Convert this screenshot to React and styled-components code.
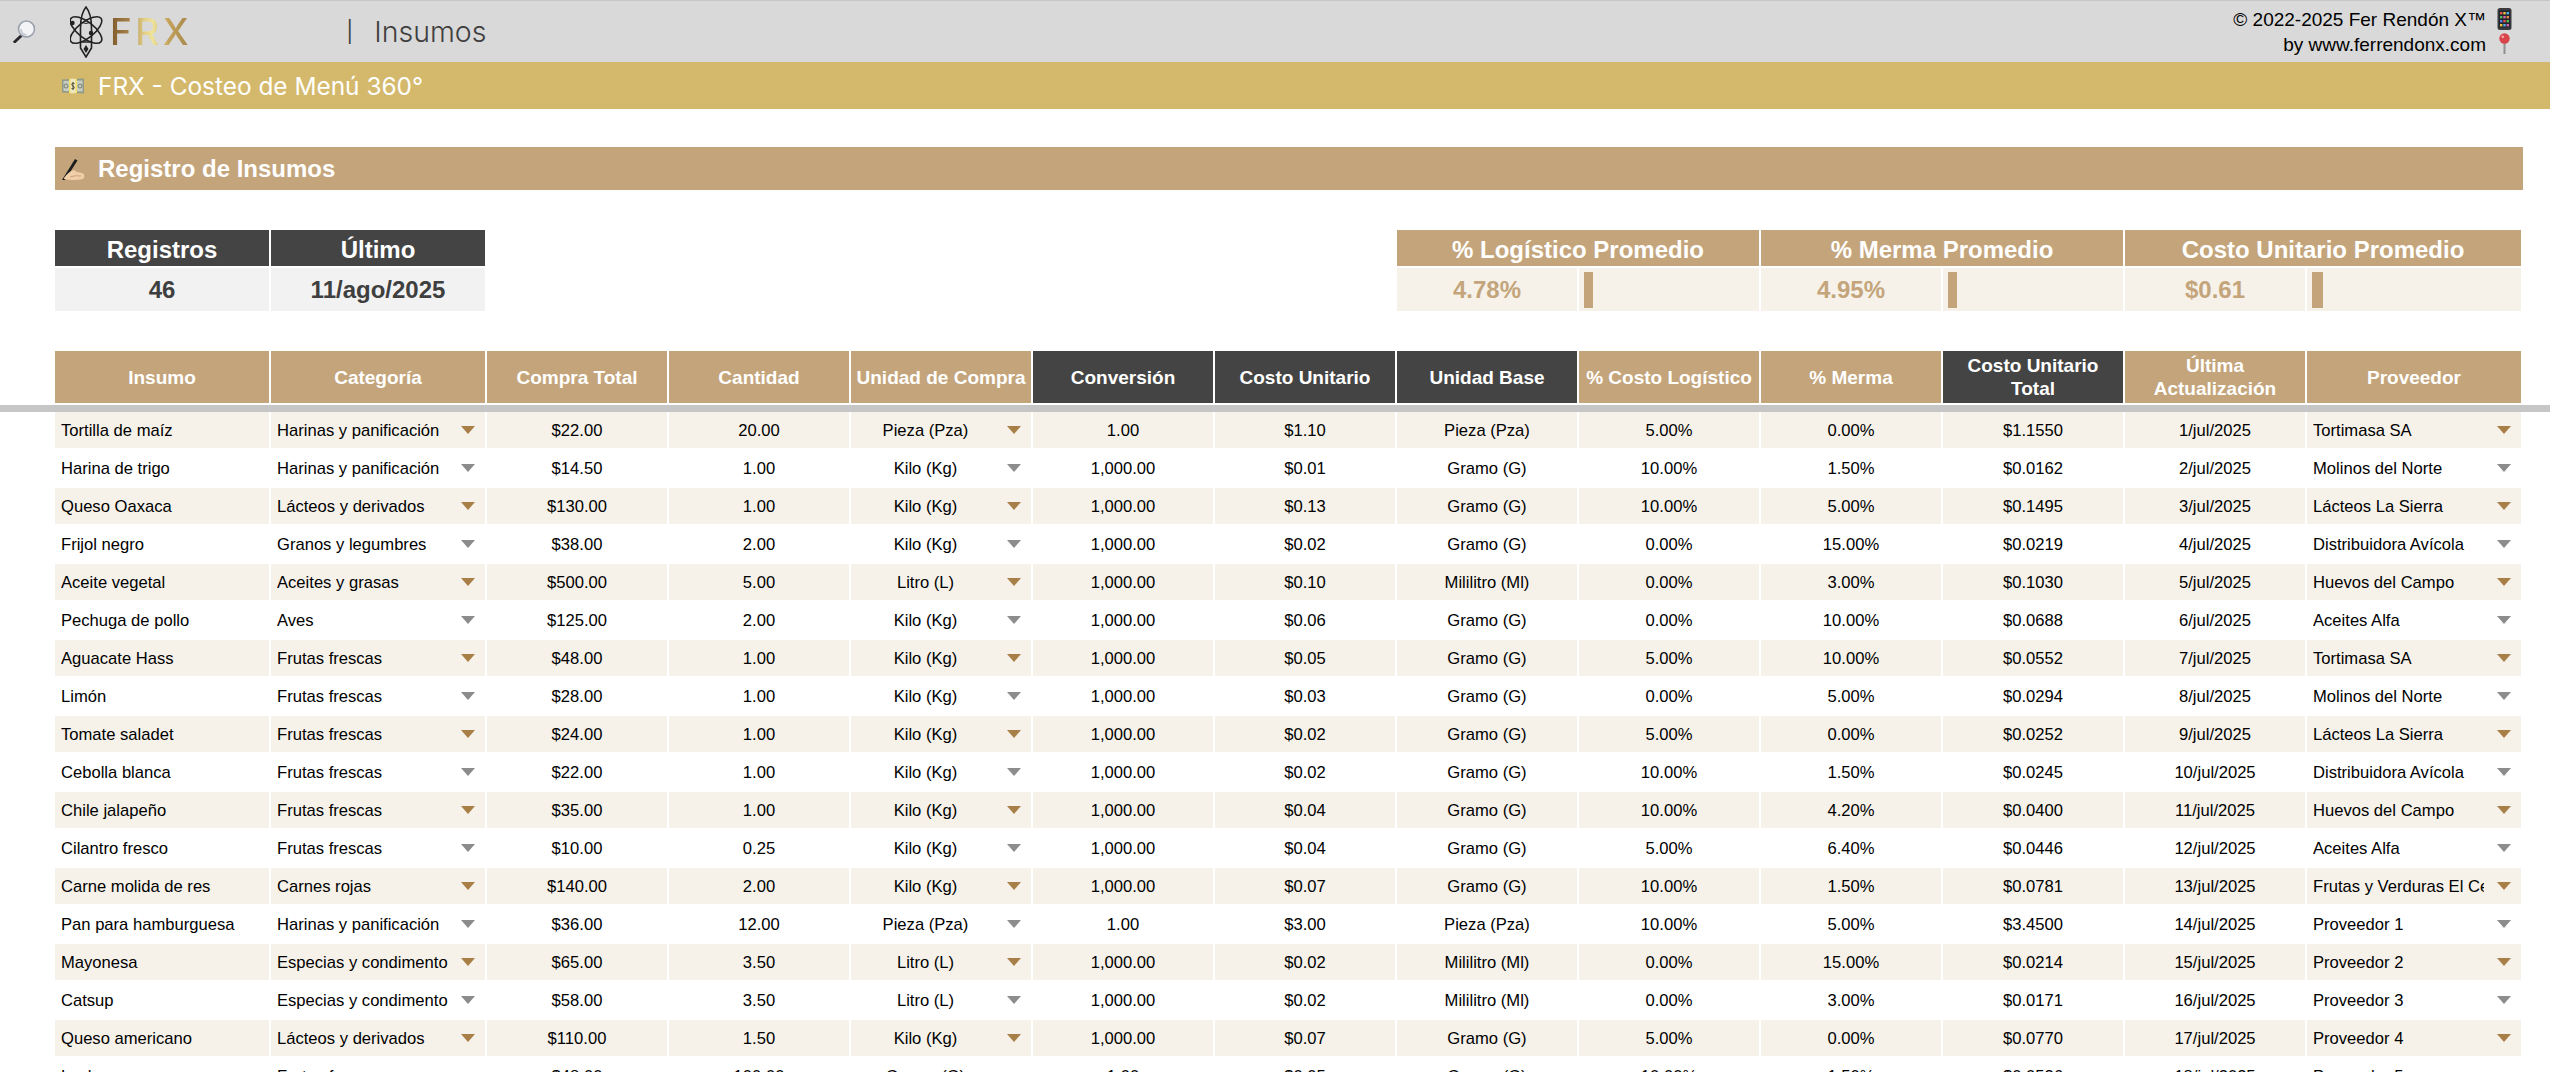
import React from 'react';
import styled, { createGlobalStyle } from 'styled-components';

const COLUMNS = '214px 214px repeat(10, 180px) 214px';
const TAN = '#c4a57b';
const DARK = '#444444';
const CREAM = '#f6f2ea';

const GlobalStyle = createGlobalStyle`
  html, body {
    margin: 0;
    padding: 0;
    background: #fff;
    overflow: hidden;
  }
  * {
    box-sizing: border-box;
  }
`;

const Page = styled.div`
  width: 2550px;
  height: 1072px;
  overflow: hidden;
  font-family: "Liberation Sans", Arial, sans-serif;
  color: #000;
`;

const TopBar = styled.header`
  height: 62px;
  display: flex;
  align-items: center;
  padding: 0 38px 0 11px;
  background: #d9d9d9;
  border-top: 1px solid #c6c6c6;
`;

const SearchIcon = styled.svg`
  width: 25px;
  height: 24px;
  flex: none;
  margin-top: 1px;
`;

const LogoMark = styled.svg`
  width: 34px;
  height: 52px;
  flex: none;
  margin-left: 34px;
`;

const LogoText = styled.span`
  margin-left: 6px;
  font-family: Inter, sans-serif;
  font-size: 37px;
  font-weight: 500;
  line-height: 1;
  letter-spacing: 3.5px;
  background: linear-gradient(90deg, #7d5a2c 0%, #a9834a 24%, #e2d086 42%, #efe39a 52%, #c2a159 72%, #a3844a 100%);
  -webkit-background-clip: text;
  background-clip: text;
  color: transparent;
`;

const PageTitle = styled.div`
  display: flex;
  align-items: center;
  margin-left: 154px;
  font-family: Inter, sans-serif;
  font-size: 28.5px;
  font-weight: 300;
  color: #3f3f3f;
`;

const TitleBar = styled.span`
  margin-right: 21px;
  font-size: 21px;
  font-weight: 400;
`;

const Credits = styled.div`
  margin-left: auto;
  display: flex;
  flex-direction: column;
  font-size: 19px;
  line-height: 25px;
`;

const CreditLine = styled.div`
  display: flex;
  justify-content: flex-end;
  align-items: center;
  gap: 11px;
  height: 25px;
`;

const CreditIcon = styled.svg`
  width: 15px;
  height: 22px;
  flex: none;
`;

const AppBar = styled.div`
  height: 47px;
  display: flex;
  align-items: center;
  gap: 13px;
  padding-left: 61px;
  background: #d4b96c;
  color: #fff;
  font-family: Inter, sans-serif;
  font-size: 24.4px;
  font-weight: 400;
`;

const BannerIcon = styled.svg`
  width: 24px;
  height: 24px;
  flex: none;
`;

const SectionTitle = styled.h1`
  height: 43px;
  width: 2468px;
  margin: 38px 0 0 55px;
  padding-left: 6px;
  display: flex;
  align-items: center;
  gap: 13px;
  background: ${TAN};
  color: #fff;
  font-size: 24px;
  font-weight: 700;
`;

const SummaryGrid = styled.section`
  display: grid;
  grid-template-columns: ${COLUMNS};
  grid-template-rows: 36px 43px;
  gap: 2px;
  margin: 40px 0 0 55px;
`;

const SummaryHead = styled.div`
  grid-column: ${props => props.$col} / span ${props => props.$span || 1};
  grid-row: 1;
  padding-top: 3px;
  text-align: center;
  font-size: 24px;
  font-weight: 700;
  line-height: 33px;
  color: #fff;
  background: ${props => props.$dark ? DARK : TAN};
`;

const SummaryValue = styled.div`
  grid-column: ${props => props.$col};
  grid-row: 2;
  text-align: center;
  font-size: 24px;
  font-weight: 700;
  line-height: 43px;
  color: ${props => props.$accent ? TAN : '#3f3f3f'};
  background: ${props => props.$accent ? CREAM : '#f2f2f2'};
`;

const SummaryBarCell = styled.div`
  grid-column: ${props => props.$col};
  grid-row: 2;
  padding: 4px 5px 3px;
  background: ${CREAM};
`;

const SummaryBar = styled.div`
  height: 100%;
  background: ${TAN};
`;

const TableHead = styled.div`
  display: grid;
  grid-template-columns: ${COLUMNS};
  gap: 2px;
  height: 52px;
  margin: 40px 0 0 55px;
`;

const HeadCell = styled.div`
  display: flex;
  align-items: center;
  justify-content: center;
  padding: 0 4px;
  text-align: center;
  font-size: 19px;
  font-weight: 700;
  line-height: 23px;
  color: #fff;
  background: ${props => props.$dark ? DARK : TAN};
`;

const FreezeLine = styled.div`
  height: 7px;
  margin-top: 2px;
  background: #c6c6c6;
`;

const TableBody = styled.div`
  display: flex;
  flex-direction: column;
  gap: 2px;
  margin-left: 55px;
`;

const Row = styled.div`
  display: grid;
  grid-template-columns: ${COLUMNS};
  gap: 2px;
  height: 36px;
`;

const Cell = styled.div`
  position: relative;
  padding: ${props => props.$select ? '0 37px 0 6px' : '0 6px'};
  font-size: 16.6px;
  line-height: 38px;
  text-align: ${props => props.$center ? 'center' : 'left'};
  background: ${props => props.$shaded ? CREAM : '#fff'};
`;

const CellText = styled.div`
  height: 36px;
  white-space: nowrap;
  overflow: hidden;
`;

const Caret = styled.i`
  position: absolute;
  top: 14px;
  right: 10px;
  width: 0;
  height: 0;
  border-style: solid;
  border-width: 8px 7px 0;
  border-color: ${props => props.$shaded ? '#a97f48' : '#8c8c8c'} transparent transparent;
`;

const heads = [
  ['Insumo'], ['Categoría'], ['Compra Total'], ['Cantidad'], ['Unidad de Compra'],
  ['Conversión', true], ['Costo Unitario', true], ['Unidad Base', true],
  ['% Costo Logístico'], ['% Merma'], ['Costo Unitario Total', true],
  ['Última Actualización'], ['Proveedor'],
];

const KG = ['Kilo (Kg)', '1,000.00', 'Gramo (G)'];
const LT = ['Litro (L)', '1,000.00', 'Mililitro (Ml)'];
const PZ = ['Pieza (Pza)', '1.00', 'Pieza (Pza)'];
const GR = ['Gramo (G)', '1.00', 'Gramo (G)'];

const rows = [
  ['Tortilla de maíz', 'Harinas y panificación', '$22.00', '20.00', PZ, '$1.10', '5.00%', '0.00%', '$1.1550', 'Tortimasa SA'],
  ['Harina de trigo', 'Harinas y panificación', '$14.50', '1.00', KG, '$0.01', '10.00%', '1.50%', '$0.0162', 'Molinos del Norte'],
  ['Queso Oaxaca', 'Lácteos y derivados', '$130.00', '1.00', KG, '$0.13', '10.00%', '5.00%', '$0.1495', 'Lácteos La Sierra'],
  ['Frijol negro', 'Granos y legumbres', '$38.00', '2.00', KG, '$0.02', '0.00%', '15.00%', '$0.0219', 'Distribuidora Avícola'],
  ['Aceite vegetal', 'Aceites y grasas', '$500.00', '5.00', LT, '$0.10', '0.00%', '3.00%', '$0.1030', 'Huevos del Campo'],
  ['Pechuga de pollo', 'Aves', '$125.00', '2.00', KG, '$0.06', '0.00%', '10.00%', '$0.0688', 'Aceites Alfa'],
  ['Aguacate Hass', 'Frutas frescas', '$48.00', '1.00', KG, '$0.05', '5.00%', '10.00%', '$0.0552', 'Tortimasa SA'],
  ['Limón', 'Frutas frescas', '$28.00', '1.00', KG, '$0.03', '0.00%', '5.00%', '$0.0294', 'Molinos del Norte'],
  ['Tomate saladet', 'Frutas frescas', '$24.00', '1.00', KG, '$0.02', '5.00%', '0.00%', '$0.0252', 'Lácteos La Sierra'],
  ['Cebolla blanca', 'Frutas frescas', '$22.00', '1.00', KG, '$0.02', '10.00%', '1.50%', '$0.0245', 'Distribuidora Avícola'],
  ['Chile jalapeño', 'Frutas frescas', '$35.00', '1.00', KG, '$0.04', '10.00%', '4.20%', '$0.0400', 'Huevos del Campo'],
  ['Cilantro fresco', 'Frutas frescas', '$10.00', '0.25', KG, '$0.04', '5.00%', '6.40%', '$0.0446', 'Aceites Alfa'],
  ['Carne molida de res', 'Carnes rojas', '$140.00', '2.00', KG, '$0.07', '10.00%', '1.50%', '$0.0781', 'Frutas y Verduras El Centro'],
  ['Pan para hamburguesa', 'Harinas y panificación', '$36.00', '12.00', PZ, '$3.00', '10.00%', '5.00%', '$3.4500', 'Proveedor 1'],
  ['Mayonesa', 'Especias y condimentos', '$65.00', '3.50', LT, '$0.02', '0.00%', '15.00%', '$0.0214', 'Proveedor 2'],
  ['Catsup', 'Especias y condimentos', '$58.00', '3.50', LT, '$0.02', '0.00%', '3.00%', '$0.0171', 'Proveedor 3'],
  ['Queso americano', 'Lácteos y derivados', '$110.00', '1.50', KG, '$0.07', '5.00%', '0.00%', '$0.0770', 'Proveedor 4'],
  ['Lechuga', 'Frutas frescas', '$48.00', '100.00', GR, '$0.05', '10.00%', '1.50%', '$0.0536', 'Proveedor 5'],
];

const summary = [
  { label: '% Logístico Promedio', value: '4.78%', col: 8, bar: 9 },
  { label: '% Merma Promedio', value: '4.95%', col: 10, bar: 9 },
  { label: 'Costo Unitario Promedio', value: '$0.61', col: 12, bar: 11 },
];

function DataCell({ shaded, center, select, children }) {
  return (
    <Cell $shaded={shaded} $center={center} $select={select}>
      <CellText>{children}</CellText>
      {select && <Caret $shaded={shaded} />}
    </Cell>
  );
}

function InsumoRow({ row, index }) {
  const [name, category, total, qty, unit, cost, logistic, waste, unitTotal, supplier] = row;
  const [buyUnit, conversion, baseUnit] = unit;
  const shaded = index % 2 === 0;

  return (
    <Row>
      <DataCell shaded={shaded}>{name}</DataCell>
      <DataCell shaded={shaded} select>{category}</DataCell>
      <DataCell shaded={shaded} center>{total}</DataCell>
      <DataCell shaded={shaded} center>{qty}</DataCell>
      <DataCell shaded={shaded} center select>{buyUnit}</DataCell>
      <DataCell shaded={shaded} center>{conversion}</DataCell>
      <DataCell shaded={shaded} center>{cost}</DataCell>
      <DataCell shaded={shaded} center>{baseUnit}</DataCell>
      <DataCell shaded={shaded} center>{logistic}</DataCell>
      <DataCell shaded={shaded} center>{waste}</DataCell>
      <DataCell shaded={shaded} center>{unitTotal}</DataCell>
      <DataCell shaded={shaded} center>{index + 1}/jul/2025</DataCell>
      <DataCell shaded={shaded} select>{supplier}</DataCell>
    </Row>
  );
}

export default function App() {
  return (
    <Page>
      <GlobalStyle />
      <TopBar>
        <SearchIcon viewBox="0 0 25 24">
          <path d="M2 21.5 L9.5 14.5 L11.5 16.5 L4.5 23 Q2.5 23.5 2 21.5Z" fill="#26262a" />
          <circle cx="15.5" cy="9" r="8" fill="#f3f4f6" stroke="#9aa2ad" strokeWidth="1.6" />
          <path d="M10 9 A5.5 5.5 0 0 0 15.5 15" fill="none" stroke="#c9ced6" strokeWidth="2" />
        </SearchIcon>
        <LogoMark viewBox="0 0 34 52" fill="none" stroke="#222" strokeWidth="1.6">
          <path d="M16 1 C11 7 10.5 14 10.5 22 L10.5 36 L21.5 36 L21.5 22 C21.5 14 21 7 16 1Z" />
          <path d="M10.5 36 L10.5 42 L16 51 L21.5 42 L21.5 36" />
          <path d="M10.5 16 Q16 19 21.5 16" strokeWidth="1" />
          <ellipse cx="16" cy="24" rx="19" ry="8" transform="rotate(38 16 24)" />
          <ellipse cx="16" cy="24" rx="19" ry="8" transform="rotate(-38 16 24)" />
          <circle cx="2.5" cy="17" r="2.2" fill="#222" stroke="none" />
          <circle cx="21" cy="27" r="2.2" fill="#222" stroke="none" />
          <path d="M16 39 L13.5 43 L16 47 L18.5 43Z" fill="#222" stroke="none" />
        </LogoMark>
        <LogoText>FRX</LogoText>
        <PageTitle>
          <TitleBar>|</TitleBar>
          Insumos
        </PageTitle>
        <Credits>
          <CreditLine>
            © 2022-2025 Fer Rendón X™
            <CreditIcon viewBox="0 0 15 22">
              <rect x="0.5" y="0" width="14" height="22" rx="2.5" fill="#3a3a3e" />
              <rect x="2" y="2.5" width="11" height="17" fill="#20242c" />
              <rect x="3" y="4" width="2.4" height="2.4" fill="#e0534b" />
              <rect x="6.3" y="4" width="2.4" height="2.4" fill="#f0c33c" />
              <rect x="9.6" y="4" width="2.4" height="2.4" fill="#4fb3e8" />
              <rect x="3" y="8" width="2.4" height="2.4" fill="#57b85a" />
              <rect x="6.3" y="8" width="2.4" height="2.4" fill="#d868b0" />
              <rect x="9.6" y="8" width="2.4" height="2.4" fill="#e88b3c" />
              <rect x="3" y="12" width="2.4" height="2.4" fill="#4f7be8" />
              <rect x="6.3" y="12" width="2.4" height="2.4" fill="#e0534b" />
              <rect x="9.6" y="12" width="2.4" height="2.4" fill="#57b85a" />
              <rect x="3" y="16" width="2.4" height="2.4" fill="#f0c33c" />
              <rect x="6.3" y="16" width="2.4" height="2.4" fill="#4fb3e8" />
              <rect x="9.6" y="16" width="2.4" height="2.4" fill="#d868b0" />
            </CreditIcon>
          </CreditLine>
          <CreditLine>
            by www.ferrendonx.com
            <CreditIcon viewBox="0 0 15 22">
              <path d="M7.5 8 L7.5 21" stroke="#8f8f8f" strokeWidth="2" />
              <circle cx="7.5" cy="5.5" r="5.2" fill="#d9434a" />
              <circle cx="5.8" cy="3.8" r="1.4" fill="#f3a5a5" />
            </CreditIcon>
          </CreditLine>
        </Credits>
      </TopBar>

      <AppBar>
        <BannerIcon viewBox="0 0 24 24">
          <path d="M1 5.5 L23 4.5 L23 19.5 L1 18.5Z" fill="#8f9a88" />
          <path d="M2.5 7 L21.5 6.5 L21.5 17.5 L2.5 17Z" fill="#c8cdc2" />
          <rect x="8" y="4.8" width="8" height="14.4" fill="#f4df5e" />
          <rect x="9.5" y="4.8" width="5" height="14.4" fill="#eee7c4" />
          <circle cx="5" cy="12" r="2" fill="none" stroke="#75806f" strokeWidth="1" />
          <circle cx="19" cy="12" r="2" fill="none" stroke="#75806f" strokeWidth="1" />
          <path d="M13.5 9.5 Q12 8.6 10.8 9.8 Q10.6 11.6 12 12 Q13.4 12.4 13.2 14.2 Q12 15.4 10.5 14.5 M12 8 L12 16" fill="none" stroke="#56503a" strokeWidth="1" />
        </BannerIcon>
        FRX - Costeo de Menú 360°
      </AppBar>

      <SectionTitle>
        <BannerIcon viewBox="0 0 24 24">
          <path d="M1 23 L14 2 L16.5 3.5 L4 23Z" fill="#1d1d1f" />
          <path d="M3 21 Q8 14 13 13 Q15 14 15.5 15 Q19 15 23 17 Q24 20 22 22 Q12 24 3 22Z" fill="#f0cfa8" />
          <path d="M9 20 Q14 18 20 19" fill="none" stroke="#cfa379" strokeWidth="1" />
        </BannerIcon>
        Registro de Insumos
      </SectionTitle>

      <SummaryGrid>
        <SummaryHead $col={1} $dark>Registros</SummaryHead>
        <SummaryValue $col={1}>46</SummaryValue>
        <SummaryHead $col={2} $dark>Último</SummaryHead>
        <SummaryValue $col={2}>11/ago/2025</SummaryValue>
        {summary.map(item => (
          <React.Fragment key={item.col}>
            <SummaryHead $col={item.col} $span={2}>{item.label}</SummaryHead>
            <SummaryValue $col={item.col} $accent>{item.value}</SummaryValue>
            <SummaryBarCell $col={item.col + 1}>
              <SummaryBar style={{ width: item.bar }} />
            </SummaryBarCell>
          </React.Fragment>
        ))}
      </SummaryGrid>

      <TableHead>
        {heads.map(([label, dark]) => (
          <HeadCell key={label} $dark={dark}>{label}</HeadCell>
        ))}
      </TableHead>
      <FreezeLine />
      <TableBody>
        {rows.map((row, index) => (
          <InsumoRow key={row[0]} row={row} index={index} />
        ))}
      </TableBody>
    </Page>
  );
}
